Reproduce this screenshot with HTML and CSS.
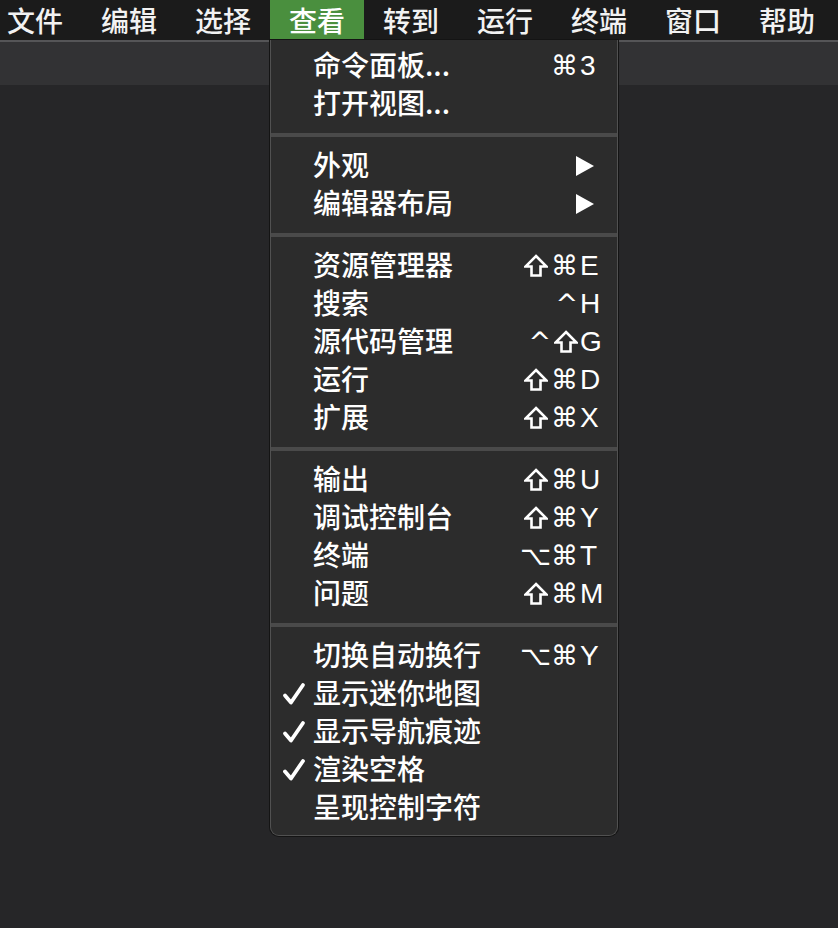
FILE: index.html
```html
<!DOCTYPE html>
<html lang="zh-CN">
<head>
<meta charset="utf-8">
<link rel="stylesheet" href="styles.css">
</head>
<body>
<div class="menubar">
  <div class="mb-item">文件</div>
  <div class="mb-item">编辑</div>
  <div class="mb-item">选择</div>
  <div class="mb-item active">查看</div>
  <div class="mb-item">转到</div>
  <div class="mb-item">运行</div>
  <div class="mb-item">终端</div>
  <div class="mb-item">窗口</div>
  <div class="mb-item">帮助</div>
</div>
<div class="toolbar"></div>
<div class="workspace"></div>

<div class="menu">
  <div class="row"><span class="chk"></span><span class="label">命令面板...</span><span class="mods">⌘</span><span class="key">3</span></div>
  <div class="row"><span class="chk"></span><span class="label">打开视图...</span><span class="mods"></span><span class="key"></span></div>
  <div class="sep"></div>
  <div class="row"><span class="chk"></span><span class="label">外观</span><span class="mods"></span><span class="key"><svg class="arrow" viewBox="0 0 18 20"><polygon points="0,0 18,10 0,20" fill="#fff"/></svg></span></div>
  <div class="row"><span class="chk"></span><span class="label">编辑器布局</span><span class="mods"></span><span class="key"><svg class="arrow" viewBox="0 0 18 20"><polygon points="0,0 18,10 0,20" fill="#fff"/></svg></span></div>
  <div class="sep"></div>
  <div class="row"><span class="chk"></span><span class="label">资源管理器</span><span class="mods"><svg class="shift" viewBox="0 0 24 24"><path d="M12 2 L22.5 12.5 L16.5 12.5 L16.5 21.5 L7.5 21.5 L7.5 12.5 L1.5 12.5 Z" fill="none" stroke="#fff" stroke-width="2.6"/></svg>⌘</span><span class="key">E</span></div>
  <div class="row"><span class="chk"></span><span class="label">搜索</span><span class="mods">^</span><span class="key">H</span></div>
  <div class="row"><span class="chk"></span><span class="label">源代码管理</span><span class="mods">^<svg class="shift" viewBox="0 0 24 24"><path d="M12 2 L22.5 12.5 L16.5 12.5 L16.5 21.5 L7.5 21.5 L7.5 12.5 L1.5 12.5 Z" fill="none" stroke="#fff" stroke-width="2.6"/></svg></span><span class="key">G</span></div>
  <div class="row"><span class="chk"></span><span class="label">运行</span><span class="mods"><svg class="shift" viewBox="0 0 24 24"><path d="M12 2 L22.5 12.5 L16.5 12.5 L16.5 21.5 L7.5 21.5 L7.5 12.5 L1.5 12.5 Z" fill="none" stroke="#fff" stroke-width="2.6"/></svg>⌘</span><span class="key">D</span></div>
  <div class="row"><span class="chk"></span><span class="label">扩展</span><span class="mods"><svg class="shift" viewBox="0 0 24 24"><path d="M12 2 L22.5 12.5 L16.5 12.5 L16.5 21.5 L7.5 21.5 L7.5 12.5 L1.5 12.5 Z" fill="none" stroke="#fff" stroke-width="2.6"/></svg>⌘</span><span class="key">X</span></div>
  <div class="sep"></div>
  <div class="row"><span class="chk"></span><span class="label">输出</span><span class="mods"><svg class="shift" viewBox="0 0 24 24"><path d="M12 2 L22.5 12.5 L16.5 12.5 L16.5 21.5 L7.5 21.5 L7.5 12.5 L1.5 12.5 Z" fill="none" stroke="#fff" stroke-width="2.6"/></svg>⌘</span><span class="key">U</span></div>
  <div class="row"><span class="chk"></span><span class="label">调试控制台</span><span class="mods"><svg class="shift" viewBox="0 0 24 24"><path d="M12 2 L22.5 12.5 L16.5 12.5 L16.5 21.5 L7.5 21.5 L7.5 12.5 L1.5 12.5 Z" fill="none" stroke="#fff" stroke-width="2.6"/></svg>⌘</span><span class="key">Y</span></div>
  <div class="row"><span class="chk"></span><span class="label">终端</span><span class="mods">⌥⌘</span><span class="key">T</span></div>
  <div class="row"><span class="chk"></span><span class="label">问题</span><span class="mods"><svg class="shift" viewBox="0 0 24 24"><path d="M12 2 L22.5 12.5 L16.5 12.5 L16.5 21.5 L7.5 21.5 L7.5 12.5 L1.5 12.5 Z" fill="none" stroke="#fff" stroke-width="2.6"/></svg>⌘</span><span class="key">M</span></div>
  <div class="sep"></div>
  <div class="row"><span class="chk"></span><span class="label">切换自动换行</span><span class="mods">⌥⌘</span><span class="key">Y</span></div>
  <div class="row"><span class="chk"><svg viewBox="0 0 24 24"><path d="M3 13.5 L9 20.5 L21 3" fill="none" stroke="#fff" stroke-width="3.8" stroke-linecap="round" stroke-linejoin="round"/></svg></span><span class="label">显示迷你地图</span><span class="mods"></span><span class="key"></span></div>
  <div class="row"><span class="chk"><svg viewBox="0 0 24 24"><path d="M3 13.5 L9 20.5 L21 3" fill="none" stroke="#fff" stroke-width="3.8" stroke-linecap="round" stroke-linejoin="round"/></svg></span><span class="label">显示导航痕迹</span><span class="mods"></span><span class="key"></span></div>
  <div class="row"><span class="chk"><svg viewBox="0 0 24 24"><path d="M3 13.5 L9 20.5 L21 3" fill="none" stroke="#fff" stroke-width="3.8" stroke-linecap="round" stroke-linejoin="round"/></svg></span><span class="label">渲染空格</span><span class="mods"></span><span class="key"></span></div>
  <div class="row"><span class="chk"></span><span class="label">呈现控制字符</span><span class="mods"></span><span class="key"></span></div>
</div>
</body>
</html>
```
FILE: styles.css
```css
html, body {
  margin: 0;
  padding: 0;
}
body {
  width: 838px;
  height: 928px;
  overflow: hidden;
  background: #262628;
  font-family: "Noto Sans CJK SC", "Noto Sans", sans-serif;
  color: #fff;
}
.menubar {
  height: 40px;
  background: #1b1b1b;
  display: flex;
  padding-left: 0;
}
.mb-item {
  flex: 0 0 94px;
  height: 40px;
  line-height: 40px;
  text-align: center;
  font-size: 28px;
  font-weight: 500;
  color: #f2f2f2;
}
.mb-item:first-child {
  flex-basis: 82px;
  text-align: right;
  padding-right: 19px;
  box-sizing: border-box;
}
.mb-item.active {
  background: #4a8f3e;
  color: #fff;
}
.toolbar {
  height: 43px;
  background: #323234;
  border-top: 2px solid #555557;
}
.workspace {
  height: 843px;
  background: #262628;
}
.menu {
  position: absolute;
  left: 270px;
  top: 40px;
  width: 346px;
  padding: 7px 0 8px;
  background: #2c2c2c;
  border: 1px solid #515151;
  border-top: none;
  border-radius: 0 0 9px 9px;
  box-shadow: 0 0 0 1px #141414;
}
.row {
  display: grid;
  grid-template-columns: 42px 1fr auto 26px;
  align-items: center;
  height: 38px;
  padding-right: 11px;
}
.chk {
  display: flex;
  justify-content: center;
  align-items: center;
  height: 38px;
  padding-left: 4px;
}
.chk svg {
  width: 24px;
  height: 24px;
}
.label {
  font-size: 28px;
  font-weight: 500;
  line-height: 35px;
  padding-bottom: 3px;
  white-space: nowrap;
}
.mods {
  display: flex;
  align-items: center;
  justify-content: flex-end;
  gap: 3px;
  height: 38px;
  font-family: "DejaVu Sans", sans-serif;
  font-size: 27px;
  line-height: 38px;
  padding-right: 2px;
}
.shift {
  width: 24px;
  height: 24px;
}
.key {
  font-family: "Liberation Sans", Arial, sans-serif;
  font-size: 28px;
  line-height: 38px;
  display: flex;
  align-items: center;
}
.arrow {
  width: 18px;
  height: 20px;
  margin-left: -4px;
}
.sep {
  height: 4px;
  margin: 10px 0;
  background: #4a4a4a;
}
```
